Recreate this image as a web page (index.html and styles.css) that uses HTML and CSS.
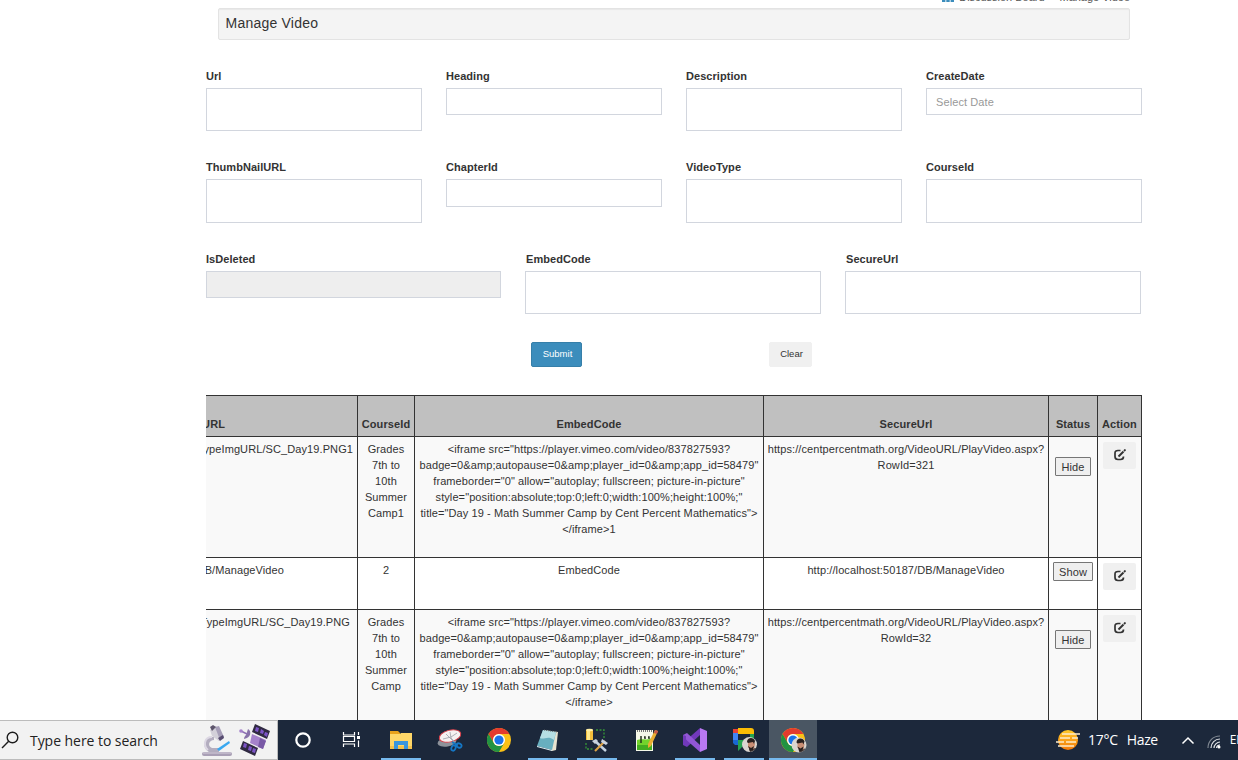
FILE: index.html
```html
<!DOCTYPE html>
<html lang="en">
<head>
<meta charset="utf-8">
<title>Manage Video</title>
<link rel="stylesheet" href="styles.css">
</head>
<body>
<main class="page">
  <nav class="crumbs">
    <svg class="crumb-icon" width="12" height="12" viewBox="0 0 12 12" fill="#3c8dbc"><path d="M0 1h3.400v11H0zM4.300 3h3.400v9H4.300zM8.600 0H12v12H8.600z"/></svg>
    <span class="crumb-board">Discussion Board</span>
    <span class="crumb-current">Manage Video</span>
  </nav>
  <h1 class="title">Manage Video</h1>

  <form class="form">
    <div class="row four">
      <label class="field">Url<textarea class="box"></textarea></label>
      <label class="field">Heading<input class="box short"></label>
      <label class="field">Description<textarea class="box"></textarea></label>
      <label class="field">CreateDate<input class="box short" placeholder="Select Date"></label>
    </div>
    <div class="row four second">
      <label class="field">ThumbNailURL<textarea class="box"></textarea></label>
      <label class="field">ChapterId<input class="box short"></label>
      <label class="field">VideoType<textarea class="box"></textarea></label>
      <label class="field">CourseId<textarea class="box"></textarea></label>
    </div>
    <div class="row three">
      <label class="field">IsDeleted<input class="box short" disabled></label>
      <label class="field"><span class="nudge">EmbedCode</span><textarea class="box"></textarea></label>
      <label class="field"><span class="nudge">SecureUrl</span><textarea class="box"></textarea></label>
    </div>
    <div class="actions">
      <button type="button" class="btn submit">Submit</button>
      <button type="button" class="btn clear">Clear</button>
    </div>
  </form>

  <table class="grid">
    <colgroup><col class="c-thumb"><col class="c-course"><col class="c-embed"><col class="c-secure"><col class="c-status"><col class="c-action"></colgroup>
    <thead>
      <tr><th><div class="clip head">ThumbNailURL</div></th><th>CourseId</th><th>EmbedCode</th><th>SecureUrl</th><th>Status</th><th>Action</th></tr>
    </thead>
    <tbody>
      <tr class="tall odd">
        <td><div class="clip one">TypeImgURL/SC_Day19.PNG1</div></td>
        <td>Grades<br>7th to<br>10th<br>Summer<br>Camp1</td>
        <td class="code">&lt;iframe src="https://player.vimeo.com/video/837827593?<br>badge=0&amp;amp;autopause=0&amp;amp;player_id=0&amp;amp;app_id=58479"<br>frameborder="0" allow="autoplay; fullscreen; picture-in-picture"<br>style="position:absolute;top:0;left:0;width:100%;height:100%;"<br>title="Day 19 - Math Summer Camp by Cent Percent Mathematics"&gt;<br>&lt;/iframe&gt;1</td>
        <td>https://centpercentmath.org/VideoURL/PlayVideo.aspx?<br>RowId=321</td>
        <td><button class="toggle low">Hide</button></td>
        <td class="act"><button class="edit"><svg width="12" height="12" viewBox="0 0 12 12"><use href="#pen"/></svg></button></td>
      </tr>
      <tr class="small">
        <td><div class="clip two">DB/ManageVideo</div></td>
        <td>2</td>
        <td>EmbedCode</td>
        <td>http://localhost:50187/DB/ManageVideo</td>
        <td><button class="toggle">Show</button></td>
        <td class="act"><button class="edit"><svg width="12" height="12" viewBox="0 0 12 12"><use href="#pen"/></svg></button></td>
      </tr>
      <tr class="tall odd">
        <td><div class="clip three">TypeImgURL/SC_Day19.PNG</div></td>
        <td>Grades<br>7th to<br>10th<br>Summer<br>Camp</td>
        <td class="code">&lt;iframe src="https://player.vimeo.com/video/837827593?<br>badge=0&amp;amp;autopause=0&amp;amp;player_id=0&amp;amp;app_id=58479"<br>frameborder="0" allow="autoplay; fullscreen; picture-in-picture"<br>style="position:absolute;top:0;left:0;width:100%;height:100%;"<br>title="Day 19 - Math Summer Camp by Cent Percent Mathematics"&gt;<br>&lt;/iframe&gt;</td>
        <td>https://centpercentmath.org/VideoURL/PlayVideo.aspx?<br>RowId=32</td>
        <td><button class="toggle low">Hide</button></td>
        <td class="act"><button class="edit"><svg width="12" height="12" viewBox="0 0 12 12"><use href="#pen"/></svg></button></td>
      </tr>
    </tbody>
  </table>
</main>

<footer class="taskbar">
  <div class="search">
    <svg width="20" height="20" viewBox="0 0 20 20" fill="none" stroke="#1c1c1c" stroke-width="1.400"><circle cx="12.500" cy="7.500" r="5.300"/><path d="M8.700 11.300 2 18"/></svg>
    <span class="search-text">Type here to search</span>
    <svg class="microscope" width="32" height="34" viewBox="0 0 32 34">
      <path d="M13 14C3 13 0 24 8 29h10v-4h-7c-5-2-3-8 2-8z" fill="#b3adbf"/>
      <path d="M11 14c-8 0-9 9-4 13" fill="none" stroke="#dcd7e3" stroke-width="2"/>
      <path d="M9 7l6-4 8 11-5 4-7-5z" fill="#d3d0d9"/><path d="M14 4l4-1 5 11-4 3z" fill="#a79fb8"/>
      <path d="M9 4l3-2 3 2-4 4z" fill="#5e566c"/><path d="M17 15l5-3 1 3-4 3z" fill="#574c70"/>
      <path d="M16 26l12-8 1 2-11 8z" fill="#39a8f0"/>
      <rect x="1" y="29" width="30" height="4" rx="2" fill="#a99fb5"/><path d="M2 30h28" stroke="#d5cedb"/>
    </svg>
    <svg class="satellite" width="32" height="34" viewBox="0 0 32 34">
      <path d="M16 1l15 7-3 8-15-7z" fill="#302a42"/><path d="M4 18l15 7-3 8-15-7z" fill="#302a42"/>
      <g fill="#7d55c7"><path d="M17 4l3 1-1 4-3-1zM22 6l3 2-1 3-3-1zM26 9l3 1-1 4-3-2zM5 20l3 1-1 4-3-1zM10 23l3 1-1 4-3-1zM14 25l3 1-1 4-3-1z"/></g>
      <path d="M13 11l14 6-3 9-13-6z" fill="#a582cb"/><path d="M21 15l6 3-3 8-5-2z" fill="#7959a6"/>
      <path d="M9 6c4 2 3 9-4 10 0-2 1-3 2-4z" fill="#8872a9"/><path d="M8 11L2 8" stroke="#8d6eb3" stroke-width="1.500"/><circle cx="2" cy="8" r="1.800" fill="#a582cb"/>
    </svg>
  </div>
  <div class="apps">
    <div class="app"><svg width="24" height="24" viewBox="0 0 24 24"><circle cx="12" cy="12" r="6.700" fill="none" stroke="#fff" stroke-width="2.200"/></svg></div>
    <div class="app"><svg width="24" height="24" viewBox="0 0 24 24" fill="none" stroke="#fff" stroke-width="1.200"><path d="M3.500 4v3h11V4M3.500 19v-3h11v3M3.500 8.500h11v5h-11zM18.500 4v3M18.500 12.500V19"/><path fill="#fff" stroke="none" d="M17 8h3v3h-3z"/></svg></div>
    <div class="app open"><svg width="24" height="24" viewBox="0 0 24 24"><path d="M1 3h8l2 2v3H1z" fill="#e9a21b"/><path d="M1 6h10l1-1h11v16H1z" fill="#ffd768"/><path d="M1 18h22v3H1z" fill="#f5c24c"/><path d="M5 21v-8h14v8h-4v-4H9v4z" fill="#3a96dd"/></svg></div>
    <div class="app"><svg width="26" height="24" viewBox="0 0 26 24"><ellipse cx="10" cy="14" rx="9.500" ry="4.500" transform="rotate(-10 10 14)" fill="#8d929a"/><ellipse cx="13" cy="8" rx="11" ry="5.800" transform="rotate(-14 13 8)" fill="#f6f1f1" stroke="#d9404a" stroke-width="1"/><path d="M6 11l8-2 6-4M13 4l1 6 4 4M9 6l8 8" fill="none" stroke="#9da0a8" stroke-width=".8"/><g fill="none" stroke="#1577c5" stroke-width="1.800"><ellipse cx="16.500" cy="20" rx="2" ry="2.800" transform="rotate(25 16.500 20)"/><ellipse cx="22" cy="17.500" rx="2.600" ry="2" transform="rotate(25 22 17.500)"/><path d="M15 14l5 3-2 2"/></g></svg></div>
    <div class="app"><svg width="24" height="24" viewBox="0 0 24 24"><use href="#chrome"/></svg></div>
    <div class="app open"><svg width="24" height="24" viewBox="0 0 24 24"><path d="M8 2l14 2-2 18-4 1z" fill="#e8e3d0"/><path d="M7 2l13 2-4 18L1 18z" fill="#68afbf"/><path d="M7 2l13 2-2 8C12 7 8 12 4 10z" fill="#b6dfe4"/><path d="M1 18l15 4v1L1 19z" fill="#e6f5f8"/><path d="M8 2l13 2" stroke="#666" stroke-dasharray="1 1"/></svg></div>
    <div class="app open"><svg width="24" height="24" viewBox="0 0 24 24"><path d="M1 2h7v10H1z" fill="#f2bd3c"/><path d="M2 2h3v10H2z" fill="#ffe98d"/><ellipse cx="4.500" cy="2" rx="3.500" ry="1.300" fill="#fff0a7"/><path d="M11 2h8v9M1 15v6h7" fill="none" stroke="#369638" stroke-width="1.300" stroke-dasharray="2 1.500"/><path d="M10 13l11 10" stroke="#c6d4e2" stroke-width="2.500"/><path d="M20 13L10 23" stroke="#dda347" stroke-width="2.200"/><path d="M7 13l4-2 2 2-3 3zM17 11l6 4-2 2-5-3z" fill="#cad3df"/></svg></div>
    <div class="app"><svg width="24" height="24" viewBox="0 0 24 24"><path d="M2 2h17v21H2z" fill="#f5f8e8"/><path d="M3 12c5-2 10 1 15-2v12H3z" fill="#73d42c"/><path d="M3 17h15v5H3z" fill="#43ae20"/><path d="M3 3h15" stroke="#777" stroke-width="2" stroke-dasharray="1 1"/><path d="M7 8v7M10 9h1v2M14 9h1v2" stroke="#26351d" stroke-width="1.500" fill="none"/><path d="M21 2l3 1-7 15-3 2v-4z" fill="#e9ae32"/><path d="M21 2l3 1-1 3-3-1z" fill="#c85848"/></svg></div>
    <div class="app open"><svg width="24" height="24" viewBox="0 0 24 24"><path d="M17 0l7 3v18l-7 3z" fill="#b978f2"/><path d="M17 0v7L4 19l-4-2v-2z" fill="#7139ba"/><path d="M0 7l4-2 13 12v7L0 9z" fill="#9257d5"/><path d="M0 7l3 1v8l-3 1z" fill="#7139ba"/></svg></div>
    <div class="app open"><svg width="28" height="28" viewBox="0 0 28 28"><path d="M3 3h5v5H3z" fill="#e94335"/><path d="M8 2h13q3 0 3 3v3H8z" fill="#fbbc04"/><path d="M3 7h5v9H3z" fill="#4285f4"/><path d="M20 8h4v8h-4zM8 14h14v5h-8l-6 6z" fill="#26a451"/><path d="M3 14h5v5H5l-2-2z" fill="#1967d2"/><use href="#avatar" x="12" y="11"/></svg></div>
    <div class="app open active"><svg width="28" height="28" viewBox="0 0 28 28"><use href="#chrome" x="2" y="2"/><use href="#avatar" x="12.500" y="11.500"/></svg></div>
  </div>
  <div class="tray">
    <svg class="weather" width="24" height="22" viewBox="0 0 24 22"><defs><linearGradient id="sun" x2="0" y2="1"><stop stop-color="#ffc928"/><stop offset="1" stop-color="#f27a0b"/></linearGradient></defs><circle cx="12" cy="11" r="10" fill="url(#sun)"/><path d="M6 5h18M4 9h10M16 9h6M0 13h8M10 13h10M2 17h16" stroke="#fbeccb" stroke-width="1.700"/></svg>
    <span class="temp">17°C</span><span class="haze">Haze</span>
    <svg class="chevron" width="14" height="9" viewBox="0 0 14 9" fill="none" stroke="#fff" stroke-width="1.500"><path d="M1.500 7.500 7 2l5.500 5.500"/></svg>
    <svg class="wifi" width="14" height="14" viewBox="0 0 14 14" fill="none" stroke-width="1.200"><path d="M1 13C1 6 6 1 13 1" stroke="#7f8791"/><path d="M4 13c0-5 4-9 9-9M7 13c0-3 3-6 6-6" stroke="#dfe2e5"/><path d="M9.700 13c0-2 1.500-3 3.300-3" stroke="#fff"/><circle cx="12" cy="12" r="1.500" fill="#fff"/></svg>
    <span class="lang">ENG</span>
  </div>
</footer>

<svg width="0" height="0" class="symbols">
  <defs>
    <g id="pen" fill="none" stroke="#333"><path d="M6.500 1.500H4Q1 1.500 1 4V7.500Q1 10.500 4 10.500H6.500Q9.500 10.500 9.500 7.500" stroke-width="1.700"/><path d="M4.500 7.500 9.500 2.500" stroke-width="2"/><path d="M10 2l1.500-1.500" stroke-width="1.800"/></g>
    <g id="chrome"><circle cx="12" cy="12" r="12" fill="#fbc116"/><path d="M1.600 6A12 12 0 0 1 22.400 6H12a6 6 0 0 0-5.200 9z" fill="#e33b2e"/><path d="M1.600 6A12 12 0 0 0 12 24l5.200-9A6 6 0 0 1 6.800 15z" fill="#229342"/><circle cx="12" cy="12" r="6" fill="#fff"/><circle cx="12" cy="12" r="4.600" fill="#1a73e8"/></g>
    <g id="avatar"><circle cx="7.500" cy="7.500" r="7.500" fill="#d9d5d0"/><path d="M8 15l-1-3 7-1 1-3a7.500 7.500 0 0 1-7 7z" fill="#443b3a"/><path d="M6 4l5-1 2 4-1 5-3 1-3-3z" fill="#c98e74"/><path d="M5 5c0-5 7-5 8-1l-1 3-1-2-5 1zM6 9l3 2 3-2-1 4-3 1z" fill="#29201f"/></g>
  </defs>
</svg>
</body>
</html>
```
FILE: styles.css
```css
* { box-sizing: border-box; }
body {
  margin: 0;
  width: 1238px;
  height: 760px;
  overflow: hidden;
  display: flex;
  flex-direction: column;
  background: #fff;
  color: #333;
  font: 11px/16px "Liberation Sans", Arial, sans-serif;
  letter-spacing: 0.095px;
}
.page { height: 720px; overflow: hidden; padding-left: 206px; width: 1142px; }
.crumbs {
  display: flex;
  justify-content: flex-end;
  height: 16px;
  margin: -11px 12px 3px 0;
  color: #555;
  letter-spacing: -0.02px;
}
.crumb-icon { margin: 1px 5px 0 0; }
.crumb-board { margin-right: 15px; }
.title {
  margin: 0 12px 28px;
  height: 32px;
  padding: 0 6.500px;
  border: 1px solid #e3e3e3;
  border-radius: 2px;
  background: #f4f4f4;
  box-shadow: inset 0 1px 1px rgba(0, 0, 0, 0.05);
  font-size: 14px;
  font-weight: 400;
  line-height: 29px;
  letter-spacing: 0.220px;
}
.row { display: grid; column-gap: 24px; height: 91px; align-items: start; }
.four { grid-template-columns: repeat(4, 216px); }
.second { height: 92px; }
.second .box { height: 44px; }
.three { grid-template-columns: 295px 296px 296px; height: 83px; }
.field { display: flex; flex-direction: column; gap: 4px; font-weight: 700; letter-spacing: 0.05px; }
.nudge { padding-left: 1px; }
.box {
  width: 100%;
  height: 43px;
  margin: 0;
  padding: 4px 9px;
  border: 1px solid #d2d6de;
  border-radius: 0;
  background: #fff;
  resize: none;
  font: 11px/16px "Liberation Sans", Arial, sans-serif;
}
.short { height: 27px; }
.second .short { height: 28px; }
.box::placeholder { color: #999; opacity: 1; letter-spacing: 0.1px; }
.box:disabled { background: #eee; }
.actions { display: flex; gap: 187px; padding-left: 325px; height: 61px; padding-top: 8px; }
.btn {
  height: 25px;
  padding: 0 0 3px 2px;
  border: 1px solid #367fa9;
  border-radius: 2px;
  font: 9.500px "Liberation Sans", Arial, sans-serif;
}
.submit { width: 51px; background: #3c8dbc; color: #fff; }
.clear { width: 43px; background: #f0f0f0; border-color: #f0f0f0; color: #333; }
.grid {
  width: 936px;
  table-layout: fixed;
  border-collapse: separate;
  border-spacing: 0;
  border-top: 1px solid #333;
  text-align: center;
  white-space: nowrap;
}
.c-thumb { width: 152px; }
.c-course { width: 57px; }
.c-embed { width: 349px; }
.c-secure { width: 285px; }
.c-status { width: 49px; }
.c-action { width: 44px; }
.grid th, .grid td { border: solid #333; border-width: 0 1px 1px 0; padding: 0; }
.grid th { height: 41px; background: #c0c0c0; vertical-align: bottom; padding-bottom: 4px; letter-spacing: 0.1px; }
.grid td { vertical-align: top; padding-top: 4px; }
.tall td { height: 121px; }
.odd td { background: #f9f9f9; }
.small td { height: 52px; }
.clip { display: flex; justify-content: flex-end; overflow: hidden; }
.clip.head { padding-right: 132px; }
.clip.one { padding-right: 4px; }
.clip.two { padding-right: 73px; }
.clip.three { padding-right: 7px; }
.toggle {
  display: block;
  height: 19px;
  margin: 0 auto;
  padding: 0 5px;
  border: 1px solid #767676;
  border-radius: 1px;
  background: #efefef;
  color: #333;
  font: 11px/16px "Liberation Sans", Arial, sans-serif;
  letter-spacing: 0.095px;
}
.low { margin-top: 16px; }
.grid .act { padding-top: 5px; }
.edit {
  display: flex;
  align-items: center;
  justify-content: center;
  width: 33px;
  height: 27px;
  margin: 0 0 0 5px;
  padding: 0 0 2px;
  border: 0;
  border-radius: 2px;
  background: #f0f0f0;
}
.symbols { position: absolute; }
.taskbar {
  display: flex;
  height: 40px;
  background: #1c283b;
  color: #fff;
  font: 14px/20px "Open Sans", "Noto Sans", sans-serif;
  letter-spacing: 0;
}
.search {
  display: flex;
  align-items: center;
  width: 278px;
  border: 1px solid #bcbcbc;
  border-left: 0;
  background: #f2f2f2;
  color: #222;
}
.search-text { width: 181px; padding: 1px 0 0 10px; white-space: nowrap; letter-spacing: -0.05px; }
.satellite { margin-left: 6px; }
.apps { display: flex; padding-left: 5px; gap: 9px; }
.app { display: flex; align-items: center; justify-content: center; width: 40px; height: 40px; border-bottom: 2px solid transparent; padding-top: 2px; }
.open { border-color: #76b9ed; }
.active { width: 48px; margin-left: -4px; background: #4a5663; }
.tray { display: flex; align-items: center; margin-left: auto; width: 182px; white-space: nowrap; overflow: hidden; }
.tray svg { flex: none; }
.temp { margin: 0 9px 0 8px; letter-spacing: -0.250px; }
.haze { letter-spacing: -0.4px; }
.chevron { margin-left: 23px; }
.wifi { margin: 4px 9px 0 12px; }
.lang { font-size: 12px; letter-spacing: -0.2px; }
```
